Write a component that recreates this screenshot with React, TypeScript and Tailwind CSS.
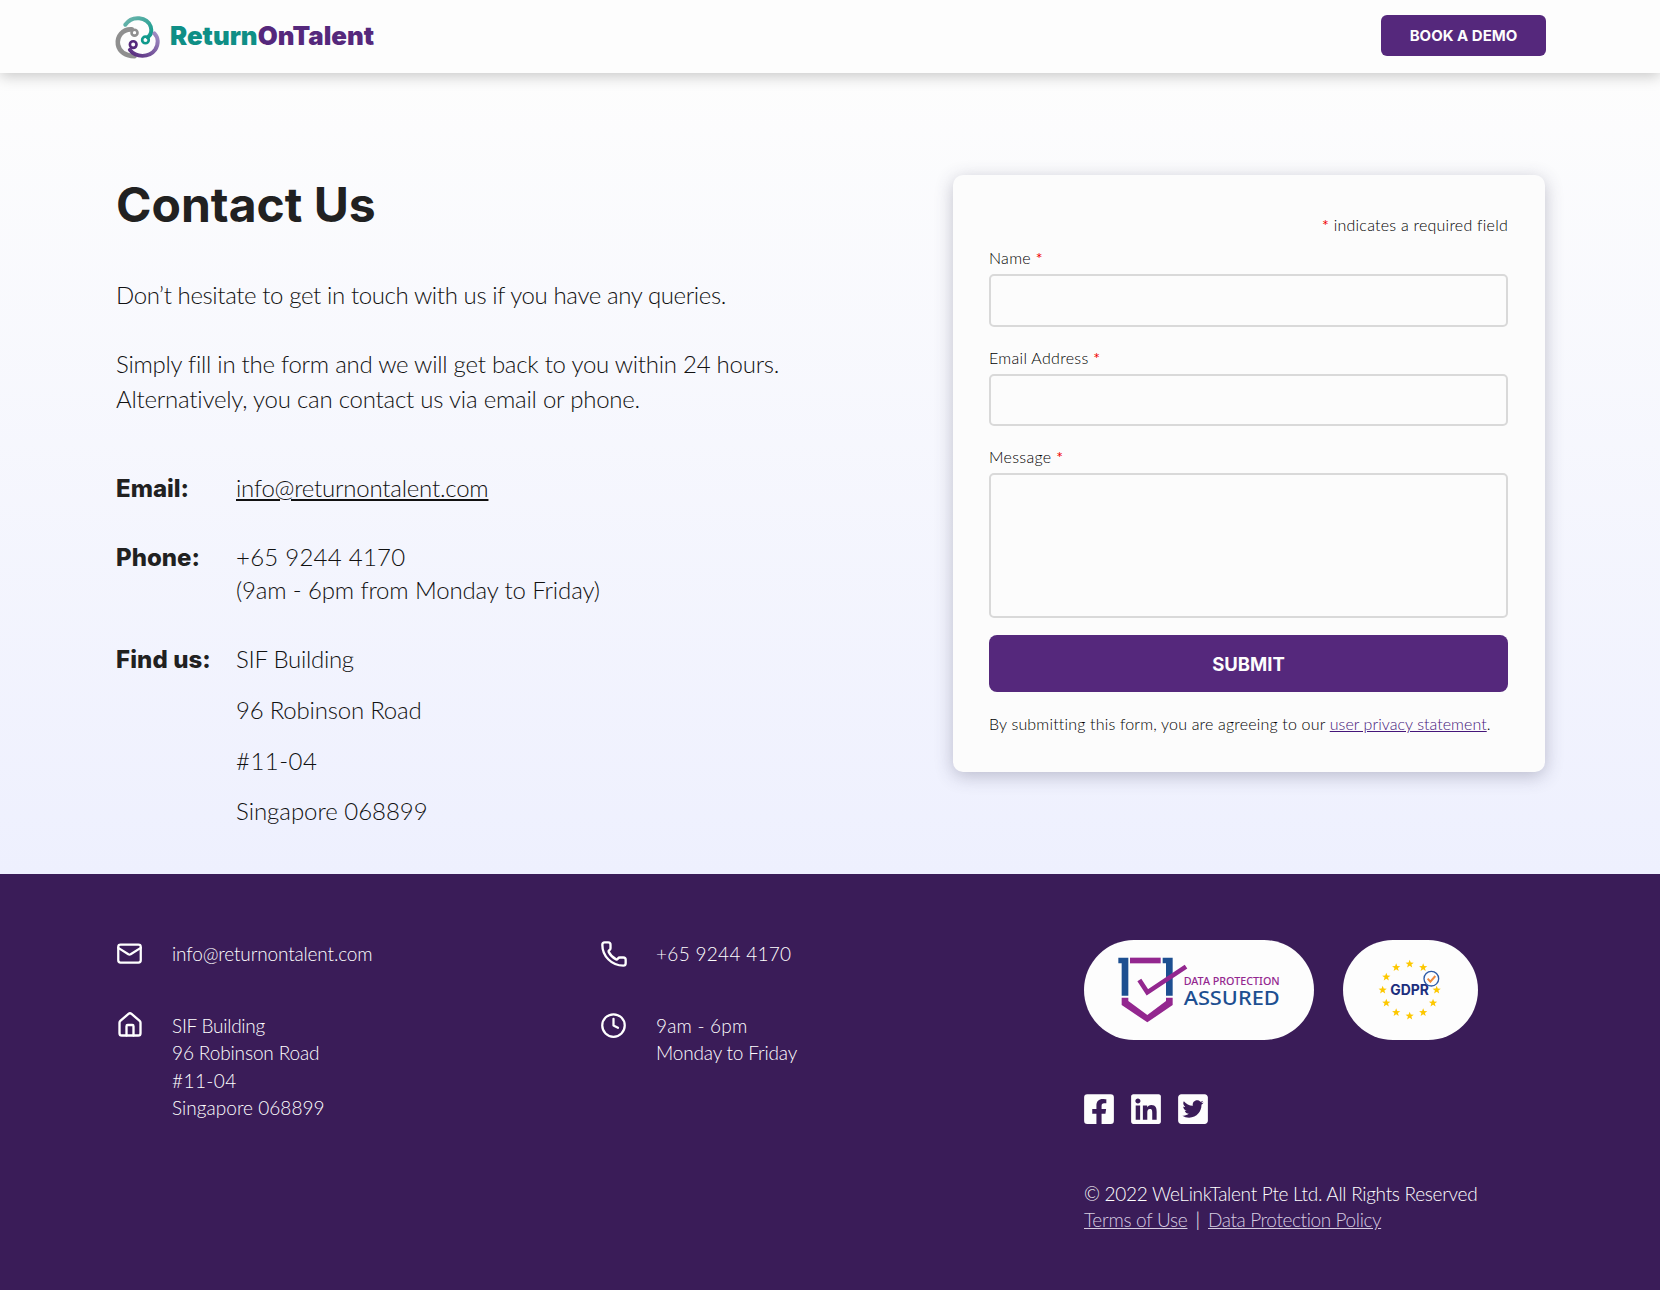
import { Clock, House, Mail, Phone } from "lucide-react";
import { FaFacebookSquare, FaLinkedin, FaTwitterSquare } from "react-icons/fa";

const Logo = () => (
  <svg width="48" height="45" viewBox="70 40 145 135" fill="none" strokeLinecap="round">
    <defs>
      <linearGradient id="tealArc" x1="0" y1="0" x2="1" y2="1">
        <stop offset="0" stopColor="#6fb5ad" />
        <stop offset="1" stopColor="#0f9a8c" />
      </linearGradient>
      <linearGradient id="purpleArc" x1="0" y1="1" x2="1" y2="0">
        <stop offset="0" stopColor="#55287c" />
        <stop offset="1" stopColor="#a08fc4" />
      </linearGradient>
    </defs>
    <path d="M104 72 C125 42 170 48 181 78 C185 92 180 104 172 110" stroke="url(#tealArc)" strokeWidth="12" />
    <circle cx="165" cy="118" r="10" stroke="#0f9a8c" strokeWidth="8" />
    <path d="M124 86 C96 84 78 108 82 132 C86 154 106 166 132 167" stroke="#8f8f8f" strokeWidth="14" />
    <circle cx="132" cy="96" r="9" stroke="#8f8f8f" strokeWidth="8" />
    <path d="M118 148 C136 172 176 172 194 148 C206 130 204 110 192 98" stroke="url(#purpleArc)" strokeWidth="12" />
    <circle cx="128" cy="132" r="10" stroke="#55287c" strokeWidth="8" />
  </svg>
);

const starPoints = (cx: number, cy: number, r: number) => {
  const pts: string[] = [];
  for (let i = 0; i < 10; i++) {
    const a = -Math.PI / 2 + (i * Math.PI) / 5;
    const d = i % 2 === 0 ? r : r * 0.42;
    pts.push(`${cx + d * Math.cos(a)},${cy + d * Math.sin(a)}`);
  }
  return pts.join(" ");
};

const DataProtectionBadge = () => (
  <div className="w-[230px] h-[100px] rounded-full bg-[#fdfdfd]">
    <svg width="230" height="100" viewBox="72 55 690 300">
      <path d="M175 108H205V222H185V125H175Z" fill="#1d4f91" />
      <path d="M338 108H308V125H318V222H338Z" fill="#1d4f91" />
      <path d="M210 108H302V125H210Z" fill="#93278f" />
      <path d="M185 228H205V238L262 280L318 238V228H338V250L262 302L185 250Z" fill="#93278f" />
      <path d="M238 175L262 212L378 135" fill="none" stroke="#93278f" strokeWidth="14" />
      <text x="371" y="190" fontSize="30" fontWeight="500" fill="#93278f" fontFamily="'Noto Sans', sans-serif" textLength="288" lengthAdjust="spacingAndGlyphs">DATA PROTECTION</text>
      <text x="371" y="251" fontSize="62" fontWeight="500" fill="#1d4f91" fontFamily="'Noto Sans', sans-serif" textLength="288" lengthAdjust="spacingAndGlyphs">ASSURED</text>
    </svg>
  </div>
);

const GdprBadge = () => (
  <div className="w-[135px] h-[100px] rounded-full bg-[#fdfdfd]">
    <svg width="135" height="100" viewBox="850 55 405 300">
      {Array.from({ length: 12 }, (_, i) => {
        const a = (i * Math.PI) / 6;
        return <polygon key={i} points={starPoints(1050 + 81 * Math.sin(a), 205 - 78 * Math.cos(a), 13)} fill="#fdc800" />;
      })}
      <text x="992" y="221" fontSize="42" fontWeight="700" fill="#1d2f7d" fontFamily="Inter, sans-serif" textLength="116" lengthAdjust="spacingAndGlyphs">GDPR</text>
      <circle cx="1115" cy="171" r="22" fill="#fdfdfd" stroke="#2d5aa6" strokeWidth="4" />
      <path d="M1104 171L1112 180L1127 163" fill="none" stroke="#f08a3c" strokeWidth="6" />
    </svg>
  </div>
);

const Req = () => <span className="text-[#f00000] font-normal">*</span>;

const Field = ({ label, tall }: { label: string; tall?: boolean }) => (
  <div className="mb-[17px]">
    <label className="block h-[30px] text-[16px] leading-[28px] tracking-[0.3px]">
      {label} <Req />
    </label>
    {tall ? (
      <textarea className="block w-full h-[145px] rounded-[5px] border-2 border-[#d9d9d9] bg-[#fcfcfc] resize-none" />
    ) : (
      <input className="block w-full h-[52.5px] rounded-[5px] border-2 border-[#d9d9d9] bg-[#fcfcfc]" />
    )}
  </div>
);

const FooterRow = ({ icon, children }: { icon: React.ReactNode; children: React.ReactNode }) => (
  <div className="flex">
    <div className="w-[56px] shrink-0 h-[27px] flex items-center">{icon}</div>
    <div className="text-[19px] leading-[27.5px] font-light">{children}</div>
  </div>
);

export default function App() {
  return (
    <div className="min-h-[1290px] flex flex-col font-['Lato',sans-serif] text-[#212121]">
      <header className="relative z-10 h-[73px] bg-[#fdfdfd] shadow-[0_3px_14px_rgba(0,0,0,0.22)] flex items-center justify-between pl-[114px] pr-[114px]">
        <div className="flex items-center gap-[8px]">
          <Logo />
          <span className="text-[25.8px] font-black tracking-[0px] text-[#0f8f86] font-['Inter',sans-serif]">
            Return<span className="text-[#55287c]">OnTalent</span>
          </span>
        </div>
        <button className="w-[165px] h-[41px] -mt-[3px] pt-[3px] rounded-[6px] bg-[#55287c] text-[#fdfdfd] text-[15px] font-bold font-['Inter',sans-serif]">
          BOOK A DEMO
        </button>
      </header>

      <main className="bg-gradient-to-b from-[#fdfdfd] to-[#eef0fe] pt-[102px] pb-[47px] pl-[116px] pr-[115px] flex justify-between items-start">
        <div className="w-[700px] text-[24px] font-light text-[#111111]">
          <h1 className="h-[58px] text-[48px] leading-[60px] font-bold text-[#212121] font-['Inter',sans-serif]">Contact Us</h1>
          <p className="mt-[44px] leading-[35px] tracking-[-0.385px]">Don’t hesitate to get in touch with us if you have any queries.</p>
          <p className="mt-[34px] leading-[35px]">
            <span className="tracking-[-0.26px]">Simply fill in the form and we will get back to you within 24 hours.</span>
            <br />
            <span className="tracking-[-0.22px]">Alternatively, you can contact us via email or phone.</span>
          </p>
          <div className="mt-[56px] flex leading-[32px]">
            <div className="w-[120px] pt-[1px] font-extrabold text-[#212121] font-['Inter',sans-serif]">Email:</div>
            <a className="underline tracking-[-0.22px]">info@returnontalent.com</a>
          </div>
          <div className="mt-[36px] flex leading-[32.5px]">
            <div className="w-[120px] pt-[1px] font-extrabold text-[#212121] font-['Inter',sans-serif]">Phone:</div>
            <div>
              <span className="tracking-[0.25px]">+65 9244 4170</span>
              <br />
              <span className="tracking-[-0.14px]">(9am - 6pm from Monday to Friday)</span>
            </div>
          </div>
          <div className="mt-[37px] flex leading-[32px]">
            <div className="w-[120px] pt-[1px] font-extrabold text-[#212121] font-['Inter',sans-serif] tracking-[0.1px]">Find us:</div>
            <div className="flex flex-col gap-[18.75px]">
              <p className="tracking-[-0.3px]">SIF Building</p>
              <p className="tracking-[-0.2px]">96 Robinson Road</p>
              <p className="tracking-[0.47px]">#11-04</p>
              <p className="tracking-[-0.03px]">Singapore 068899</p>
            </div>
          </div>
        </div>

        <form className="w-[592px] h-[597px] rounded-[10px] bg-[#fcfcfc] shadow-[0_4px_18px_rgba(60,60,90,0.3)] pl-[36px] pr-[37px] pt-[36px] font-light text-black">
          <p className="text-right text-[16px] leading-[28px] mb-[5px] tracking-[0.24px]">
            <Req /> indicates a required field
          </p>
          <Field label="Name" />
          <Field label="Email Address" />
          <Field label="Message" tall />
          <button type="button" className="w-full h-[57px] pt-[2px] rounded-[8px] bg-[#55287c] text-[#fdfdfd] text-[18.5px] font-bold font-['Inter',sans-serif]">
            SUBMIT
          </button>
          <p className="mt-[20px] text-[16px] leading-[24px] tracking-[0.18px]">
            By submitting this form, you are agreeing to our{" "}
            <a className="underline text-[#45167a] tracking-[0.05px]">user privacy statement</a>.
          </p>
        </form>
      </main>

      <footer className="flex-1 bg-[#3a1c58] text-white pt-[66px] pl-[116px] grid grid-cols-[484px_484px_1fr]">
        <div className="flex flex-col gap-[44px]">
          <FooterRow icon={<Mail size={27} strokeWidth={2} />}>
            <span className="tracking-[-0.15px]">info@returnontalent.com</span>
          </FooterRow>
          <FooterRow icon={<House size={28} strokeWidth={2} />}>
            <span className="tracking-[-0.26px]">SIF Building</span>
            <br />
            <span className="tracking-[-0.12px]">96 Robinson Road</span>
            <br />
            <span className="tracking-[0.43px]">#11-04</span>
            <br />
            <span className="tracking-[0.03px]">Singapore 068899</span>
          </FooterRow>
        </div>
        <div className="flex flex-col gap-[44px]">
          <FooterRow icon={<Phone size={28} strokeWidth={2} />}>
            <span className="tracking-[0.3px]">+65 9244 4170</span>
          </FooterRow>
          <FooterRow icon={<Clock size={27} strokeWidth={2} />}>
            <span className="tracking-[0.2px]">9am - 6pm</span>
            <br />
            <span className="tracking-[-0.17px]">Monday to Friday</span>
          </FooterRow>
        </div>
        <div className="font-light">
          <div className="flex gap-[29px]">
            <DataProtectionBadge />
            <GdprBadge />
          </div>
          <div className="mt-[52px] flex gap-[17px] text-[#fdfdfd]">
            <FaFacebookSquare className="w-[30px] h-[34px]" />
            <FaLinkedin className="w-[30px] h-[34px]" />
            <FaTwitterSquare className="w-[30px] h-[34px]" />
          </div>
          <p className="mt-[55px] text-[19px] leading-[25.5px] tracking-[-0.29px]">© 2022 WeLinkTalent Pte Ltd. All Rights Reserved</p>
          <p className="text-[19px] leading-[25.5px]">
            <a className="underline text-[#d6cce0] tracking-[-0.28px]">Terms of Use</a>
            <span className="mx-[8px]">|</span>
            <a className="underline text-[#d6cce0] tracking-[-0.39px]">Data Protection Policy</a>
          </p>
        </div>
      </footer>
    </div>
  );
}
